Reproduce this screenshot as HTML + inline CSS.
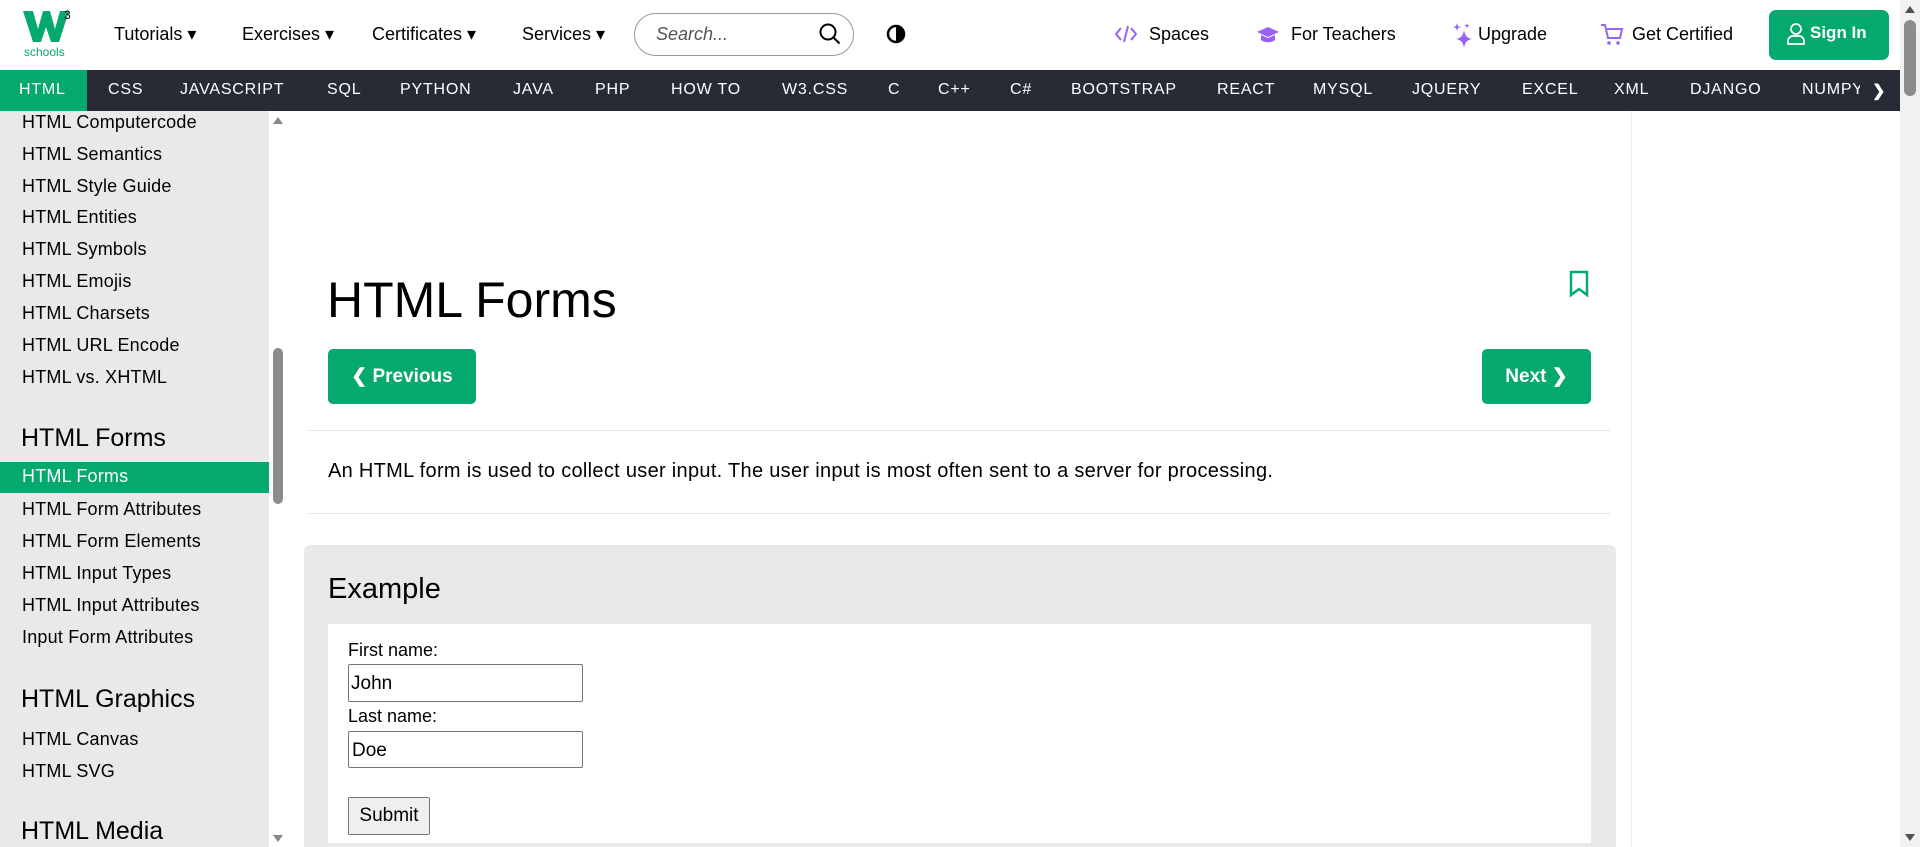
<!DOCTYPE html>
<html style="width:1920px;height:847px;overflow:hidden"><head><meta charset="utf-8"><style>
*{box-sizing:border-box;margin:0;padding:0}
body{width:1920px;height:847px;overflow:hidden;font-family:"Liberation Sans",sans-serif;color:#000;background:#fff;position:relative}
.a{position:absolute;white-space:nowrap}
.top{position:absolute;left:0;top:0;width:1900px;height:70px;background:#fff}
.tn{font-size:18px;top:24px}
.nav{position:absolute;left:0;top:70px;width:1900px;height:41px;background:#282a35}
.nav span{position:absolute;top:11px;color:#fff;font-size:16px;letter-spacing:0.8px}
.side{position:absolute;left:0;top:111px;width:269px;height:736px;background:#e7e9eb}
.si{position:absolute;left:22px;font-size:18px;letter-spacing:0.2px;color:#000}
.sh{position:absolute;left:21px;font-size:25px}
.btn{position:absolute;background:#04aa6d;color:#fff;font-weight:bold;font-size:19px;border-radius:5px;text-align:center}
</style></head><body>
<div class="top">
 <svg class="a" style="left:22px;top:8px" width="52" height="50" viewBox="0 0 52 50">
  <path d="M1 3h10l5 18 5-18h7l5 18 5-18h9l-10 31h-8l-5-15-5 15h-8z" fill="#04aa6d"/>
  <text x="42" y="11" font-size="12" font-family="Liberation Sans" fill="#000">3</text>
  <text x="2" y="48" font-size="12" font-family="Liberation Sans" fill="#04aa6d">schools</text>
 </svg>
 <div class="a tn" style="left:114px">Tutorials ▾</div>
 <div class="a tn" style="left:242px">Exercises ▾</div>
 <div class="a tn" style="left:372px">Certificates ▾</div>
 <div class="a tn" style="left:522px">Services ▾</div>
 <div class="a" style="left:634px;top:13px;width:220px;height:43px;border:1px solid #999;border-radius:22px"></div>
 <div class="a" style="left:656px;top:24px;font-size:18px;font-style:italic;color:#555">Search...</div>
 <svg class="a" style="left:818px;top:22px" width="24" height="24" viewBox="0 0 24 24"><circle cx="10" cy="10" r="7.5" fill="none" stroke="#000" stroke-width="2"/><path d="M15.5 15.5l6 6" stroke="#000" stroke-width="2"/></svg>
 <svg class="a" style="left:886px;top:24px" width="20" height="20" viewBox="0 0 20 20"><circle cx="10" cy="10" r="8" fill="none" stroke="#000" stroke-width="2.5"/><path d="M10 2a8 8 0 0 1 0 16z" fill="#000"/></svg>
 <svg class="a" style="left:1114px;top:24px" width="24" height="20" viewBox="0 0 24 20"><path d="M7 4l-5 6 5 6M17 4l5 6-5 6M14 2l-4 16" fill="none" stroke="#9763f6" stroke-width="2"/></svg>
 <div class="a tn" style="left:1149px">Spaces</div>
 <svg class="a" style="left:1256px;top:26px" width="24" height="18" viewBox="0 0 24 18"><path d="M12 1l11 5-11 5L1 6z" fill="#9763f6"/><path d="M5 9v5c3 3 11 3 14 0V9l-7 3z" fill="#9763f6"/></svg>
 <div class="a tn" style="left:1291px">For Teachers</div>
 <svg class="a" style="left:1452px;top:22px" width="22" height="26" viewBox="0 0 22 26"><path d="M12 8c1 6 3 8 8 9-5 1-7 3-8 9-1-6-3-8-8-9 5-1 7-3 8-9z" fill="#9763f6"/><path d="M5 1l1 3 3 1-3 1-1 3-1-3-3-1 3-1z" fill="#9763f6"/><path d="M15 1l.7 2 2 .7-2 .7-.7 2-.7-2-2-.7 2-.7z" fill="#9763f6"/></svg>
 <div class="a tn" style="left:1478px">Upgrade</div>
 <svg class="a" style="left:1600px;top:23px" width="24" height="24" viewBox="0 0 24 24"><path d="M1 2h4l3 13h12l2-9H7" fill="none" stroke="#9763f6" stroke-width="2"/><circle cx="9" cy="20" r="1.8" fill="#9763f6"/><circle cx="18" cy="20" r="1.8" fill="#9763f6"/></svg>
 <div class="a tn" style="left:1632px">Get Certified</div>
 <div class="btn" style="left:1769px;top:10px;width:120px;height:50px;border-radius:7px"></div>
 <svg class="a" style="left:1786px;top:22px" width="20" height="24" viewBox="0 0 20 24"><circle cx="10" cy="7" r="5" fill="none" stroke="#fff" stroke-width="1.8"/><path d="M2 22v-3a5 5 0 0 1 5-5h6a5 5 0 0 1 5 5v3z" fill="none" stroke="#fff" stroke-width="1.8"/></svg>
 <div class="a" style="left:1810px;top:23px;color:#fff;font-weight:bold;font-size:17px">Sign In</div>
</div>
<div class="nav">
 <div class="a" style="left:0;top:0;width:87px;height:41px;background:#04aa6d"></div>
 <span style="left:19px">HTML</span><span style="left:108px">CSS</span><span style="left:180px">JAVASCRIPT</span><span style="left:327px">SQL</span><span style="left:400px">PYTHON</span><span style="left:513px">JAVA</span><span style="left:595px">PHP</span><span style="left:671px">HOW TO</span><span style="left:782px">W3.CSS</span><span style="left:888px">C</span><span style="left:938px">C++</span><span style="left:1010px">C#</span><span style="left:1071px">BOOTSTRAP</span><span style="left:1217px">REACT</span><span style="left:1313px">MYSQL</span><span style="left:1412px">JQUERY</span><span style="left:1522px">EXCEL</span><span style="left:1614px">XML</span><span style="left:1690px">DJANGO</span><span style="left:1802px">NUMPY</span>
 <div class="a" style="left:1860px;top:0;width:40px;height:41px;background:#282a35"></div>
 <span style="left:1872px;font-weight:bold">❯</span>
</div>
<div class="side">
 <div class="si" style="top:1px">HTML Computercode</div>
 <div class="si" style="top:33px">HTML Semantics</div>
 <div class="si" style="top:65px">HTML Style Guide</div>
 <div class="si" style="top:96px">HTML Entities</div>
 <div class="si" style="top:128px">HTML Symbols</div>
 <div class="si" style="top:160px">HTML Emojis</div>
 <div class="si" style="top:192px">HTML Charsets</div>
 <div class="si" style="top:224px">HTML URL Encode</div>
 <div class="si" style="top:256px">HTML vs. XHTML</div>
 <div class="sh" style="top:313px">HTML Forms</div>
 <div class="a" style="left:0;top:351px;width:269px;height:31px;background:#04aa6d"></div>
 <div class="si" style="top:355px;color:#fff">HTML Forms</div>
 <div class="si" style="top:388px">HTML Form Attributes</div>
 <div class="si" style="top:420px">HTML Form Elements</div>
 <div class="si" style="top:452px">HTML Input Types</div>
 <div class="si" style="top:484px">HTML Input Attributes</div>
 <div class="si" style="top:516px">Input Form Attributes</div>
 <div class="sh" style="top:574px">HTML Graphics</div>
 <div class="si" style="top:618px">HTML Canvas</div>
 <div class="si" style="top:650px">HTML SVG</div>
 <div class="sh" style="top:706px">HTML Media</div>
</div>
<div class="a" style="left:269px;top:111px;width:18px;height:736px;background:#fff"></div>
<svg class="a" style="left:272px;top:115px" width="12" height="10"><path d="M1 9L6 2l5 7z" fill="#888"/></svg>
<div class="a" style="left:273px;top:348px;width:10px;height:156px;background:#8c8c8c;border-radius:5px"></div>
<svg class="a" style="left:272px;top:834px" width="12" height="10"><path d="M1 1l5 7 5-7z" fill="#888"/></svg>
<div class="a" style="left:1631px;top:111px;width:1px;height:736px;background:#eee"></div>
<div class="a" style="left:327px;top:271px;font-size:50px">HTML Forms</div>
<svg class="a" style="left:1568px;top:270px" width="22" height="28" viewBox="0 0 22 28"><path d="M3 2h16v23l-8-6-8 6z" fill="none" stroke="#04aa6d" stroke-width="2.5"/></svg>
<div class="btn" style="left:328px;top:349px;width:148px;height:55px;line-height:55px">❮ Previous</div>
<div class="btn" style="left:1482px;top:349px;width:109px;height:55px;line-height:55px">Next ❯</div>
<div class="a" style="left:308px;top:430px;width:1302px;height:1px;background:#e5e5e5"></div>
<div class="a" style="left:328px;top:460px;font-size:20px;letter-spacing:0.3px">An HTML form is used to collect user input. The user input is most often sent to a server for processing.</div>
<div class="a" style="left:308px;top:513px;width:1302px;height:1px;background:#e5e5e5"></div>
<div class="a" style="left:304px;top:545px;width:1312px;height:302px;background:#e7e9eb;border-radius:6px 6px 0 0"></div>
<div class="a" style="left:328px;top:573px;font-size:29px">Example</div>
<div class="a" style="left:328px;top:624px;width:1263px;height:219px;background:#fff"></div>
<div class="a" style="left:348px;top:640px;font-size:18px">First name:</div>
<div class="a" style="left:348px;top:664px;width:235px;height:38px;border:1px solid #767676;border-radius:2px;font-size:19px;padding:8px 2px">John</div>
<div class="a" style="left:348px;top:706px;font-size:18px">Last name:</div>
<div class="a" style="left:348px;top:731px;width:235px;height:37px;border:1px solid #767676;border-radius:2px;font-size:19px;padding:8px 3px">Doe</div>
<div class="a" style="left:348px;top:797px;width:82px;height:38px;border:1px solid #767676;border-radius:2px;background:#efefef;font-size:19px;text-align:center;line-height:36px">Submit</div>
<div class="a" style="left:1900px;top:0;width:20px;height:847px;background:#f1f1f1"></div>
<svg class="a" style="left:1905px;top:5px" width="10" height="8"><path d="M0 8L5 1l5 7z" fill="#505050"/></svg>
<div class="a" style="left:1904px;top:20px;width:12px;height:76px;background:#8c8c8c;border-radius:6px"></div>
<svg class="a" style="left:1905px;top:834px" width="10" height="8"><path d="M0 0l5 7 5-7z" fill="#505050"/></svg>
</body></html>
